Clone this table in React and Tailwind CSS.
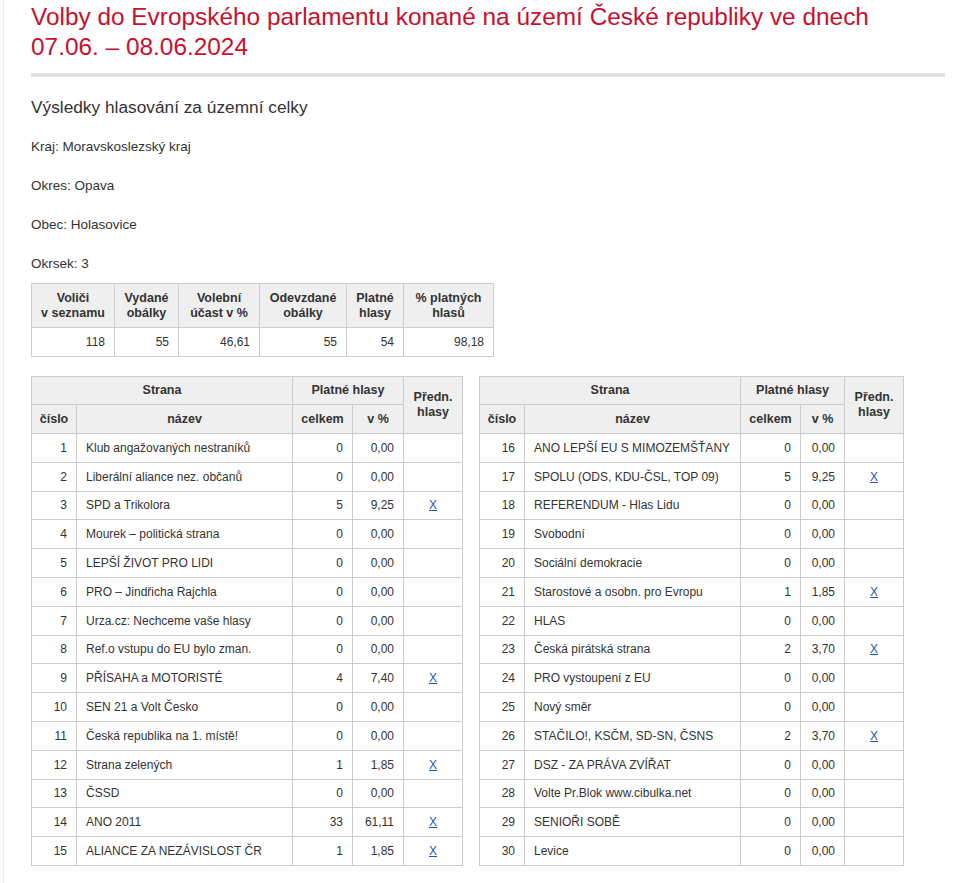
const left = [
  ["1", "Klub angažovaných nestraníků", "0", "0,00", false],
  ["2", "Liberální aliance nez. občanů", "0", "0,00", false],
  ["3", "SPD a Trikolora", "5", "9,25", true],
  ["4", "Mourek – politická strana", "0", "0,00", false],
  ["5", "LEPŠÍ ŽIVOT PRO LIDI", "0", "0,00", false],
  ["6", "PRO – Jindřicha Rajchla", "0", "0,00", false],
  ["7", "Urza.cz: Nechceme vaše hlasy", "0", "0,00", false],
  ["8", "Ref.o vstupu do EU bylo zman.", "0", "0,00", false],
  ["9", "PŘÍSAHA a MOTORISTÉ", "4", "7,40", true],
  ["10", "SEN 21 a Volt Česko", "0", "0,00", false],
  ["11", "Česká republika na 1. místě!", "0", "0,00", false],
  ["12", "Strana zelených", "1", "1,85", true],
  ["13", "ČSSD", "0", "0,00", false],
  ["14", "ANO 2011", "33", "61,11", true],
  ["15", "ALIANCE ZA NEZÁVISLOST ČR", "1", "1,85", true],
];

const right = [
  ["16", "ANO LEPŠÍ EU S MIMOZEMŠŤANY", "0", "0,00", false],
  ["17", "SPOLU (ODS, KDU-ČSL, TOP 09)", "5", "9,25", true],
  ["18", "REFERENDUM - Hlas Lidu", "0", "0,00", false],
  ["19", "Svobodní", "0", "0,00", false],
  ["20", "Sociální demokracie", "0", "0,00", false],
  ["21", "Starostové a osobn. pro Evropu", "1", "1,85", true],
  ["22", "HLAS", "0", "0,00", false],
  ["23", "Česká pirátská strana", "2", "3,70", true],
  ["24", "PRO vystoupení z EU", "0", "0,00", false],
  ["25", "Nový směr", "0", "0,00", false],
  ["26", "STAČILO!, KSČM, SD-SN, ČSNS", "2", "3,70", true],
  ["27", "DSZ - ZA PRÁVA ZVÍŘAT", "0", "0,00", false],
  ["28", "Volte Pr.Blok www.cibulka.net", "0", "0,00", false],
  ["29", "SENIOŘI SOBĚ", "0", "0,00", false],
  ["30", "Levice", "0", "0,00", false],
];

const th = "border border-[#cccccc] bg-[#efefef] font-bold text-center text-[12.5px] leading-[15px] px-1";
const td = "border border-[#cccccc] px-[9px] text-[12px]";

function PartyTable({ rows, width, pctWidth }) {
  return (
    <table className={"table-fixed border-collapse " + width}>
      <colgroup>
        <col className="w-[45px]" />
        <col className="w-[216px]" />
        <col className="w-[60px]" />
        <col className={pctWidth} />
        <col className="w-[59px]" />
      </colgroup>
      <thead>
        <tr className="h-[28px]">
          <th colSpan={2} className={th}>Strana</th>
          <th colSpan={2} className={th}>Platné hlasy</th>
          <th rowSpan={2} className={th}>Předn.<br />hlasy</th>
        </tr>
        <tr className="h-[29px]">
          <th className={th}>číslo</th>
          <th className={th}>název</th>
          <th className={th}>celkem</th>
          <th className={th}>v %</th>
        </tr>
      </thead>
      <tbody>
        {rows.map((r) => (
          <tr key={r[0]} className="h-[28.8px]">
            <td className={td + " text-right"}>{r[0]}</td>
            <td className={td + " text-left whitespace-nowrap"}>{r[1]}</td>
            <td className={td + " text-right"}>{r[2]}</td>
            <td className={td + " text-right"}>{r[3]}</td>
            <td className={td + " text-center"}>
              {r[4] && <a href="#" className="text-[#1f56b3] underline">X</a>}
            </td>
          </tr>
        ))}
      </tbody>
    </table>
  );
}

export default function App() {
  return (
    <div className="min-h-screen bg-white font-['Liberation_Sans',Arial,sans-serif] text-[12px] text-[#333333]">
      <div className="ml-[3px] min-h-screen border-l border-[#ebebeb] pl-[27px] pr-[25px] pt-[2px] pb-4">
        <h1 className="max-w-[880px] text-[24.4px] leading-[30px] text-[#c8102e]">
          Volby do Evropského parlamentu konané na území České republiky ve dnech 07.06. – 08.06.2024
        </h1>
        <div className="mt-[11px] h-[4px] w-[914px] bg-[#e3e3e3]" />

        <h2 className="mt-[18px] text-[17.3px] leading-[24px] text-[#333333]">Výsledky hlasování za územní celky</h2>

        <div className="mt-[20px] flex flex-col gap-[23px] text-[13.5px] leading-[16px]">
          <p>Kraj: Moravskoslezský kraj</p>
          <p>Okres: Opava</p>
          <p>Obec: Holasovice</p>
          <p>Okrsek: 3</p>
        </div>

        <table className="mt-[11px] w-[462px] table-fixed border-collapse">
          <colgroup>
            <col className="w-[83px]" />
            <col className="w-[64px]" />
            <col className="w-[81px]" />
            <col className="w-[87px]" />
            <col className="w-[57px]" />
            <col className="w-[90px]" />
          </colgroup>
          <thead>
            <tr className="h-[44px]">
              <th className={th}>Voliči<br />v seznamu</th>
              <th className={th}>Vydané<br />obálky</th>
              <th className={th}>Volební<br />účast v %</th>
              <th className={th}>Odevzdané<br />obálky</th>
              <th className={th}>Platné<br />hlasy</th>
              <th className={th}>% platných<br />hlasů</th>
            </tr>
          </thead>
          <tbody>
            <tr className="h-[29px]">
              <td className={td + " text-right"}>118</td>
              <td className={td + " text-right"}>55</td>
              <td className={td + " text-right"}>46,61</td>
              <td className={td + " text-right"}>55</td>
              <td className={td + " text-right"}>54</td>
              <td className={td + " text-right"}>98,18</td>
            </tr>
          </tbody>
        </table>

        <div className="mt-[19px] flex items-start gap-[16px]">
          <PartyTable rows={left} width="w-[431px]" pctWidth="w-[51px]" />
          <PartyTable rows={right} width="w-[424px]" pctWidth="w-[44px]" />
        </div>
      </div>
    </div>
  );
}
